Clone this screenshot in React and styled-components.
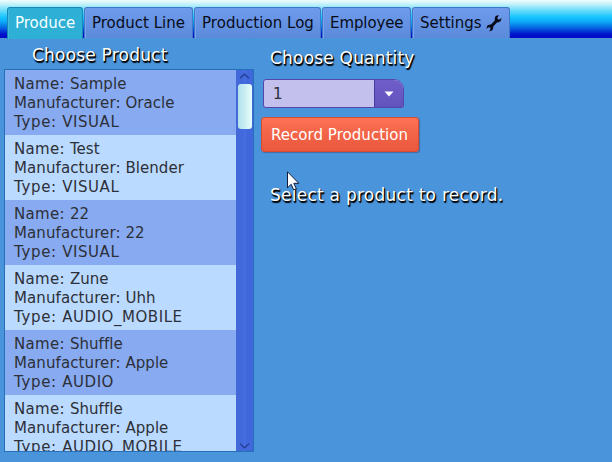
import React from "react";
import styled, { createGlobalStyle } from "styled-components";

const GlobalStyle = createGlobalStyle`
  * { box-sizing: border-box; }
  html, body { margin: 0; overflow: hidden; }
  body { font-family: Verdana, "DejaVu Sans", sans-serif; font-size: 15px; color: #2d3038; }
`;

const Window = styled.main`
  width: 612px;
  height: 462px;
  display: flex;
  flex-direction: column;
  background: #4a94dc;
  overflow: hidden;
`;

const TabBar = styled.nav`
  height: 38px;
  flex: none;
  display: flex;
  align-items: flex-end;
  gap: 1px;
  padding-left: 7px;
  background: linear-gradient(#effcfd 0, #c5f3fa 4px, #62dafa 11px, #16c5ff 17px, #0da6f7 22px, #0563e0 28px, #0014ce 34px, #0008c4 38px);
`;

const Tab = styled.button`
  width: ${(p) => p.$width}px;
  height: ${(p) => (p.$active ? 32 : 31)}px;
  margin: 0 0 ${(p) => (p.$active ? -1 : 0)}px;
  padding: 0 0 ${(p) => (p.$active ? 1 : 0)}px 7px;
  display: flex;
  align-items: center;
  gap: 4px;
  flex: none;
  border: 1px solid ${(p) => (p.$active ? "#1689b8" : "#4078c8")};
  border-bottom: 0;
  border-radius: 3px 3px 0 0;
  background: ${(p) => (p.$active ? "#2eafd5" : "linear-gradient(#709bed, #5b8ada)")};
  box-shadow: inset 1px 0 ${(p) => (p.$active ? "#42bbdd" : "#7aa1ed")};
  color: ${(p) => (p.$active ? "#f5ffff" : "#080c18")};
  font: inherit;
  letter-spacing: ${(p) => p.$spacing || 0}px;
  white-space: nowrap;
`;

const Content = styled.div`
  flex: 1;
  min-height: 0;
  display: flex;
`;

const ProductColumn = styled.section`
  width: 254px;
  padding: 6px 0 0 4px;
`;

const Label = styled.h2`
  margin: 0;
  height: 25px;
  line-height: 22px;
  padding-left: ${(p) => p.$indent || 0}px;
  color: #fff;
  font-size: 17px;
  font-weight: 400;
  letter-spacing: ${(p) => p.$spacing}px;
  text-shadow: 1px 1px 1px #000, 1px 2px 1px #000;
  white-space: nowrap;
`;

const ListBox = styled.div`
  width: 250px;
  height: 383px;
  display: flex;
  border: 1px solid #266fb9;
  overflow: hidden;
`;

const Rows = styled.div`
  width: 231px;
  overflow: hidden;
`;

const Row = styled.div`
  height: 65px;
  padding: 5px 0 3px 9px;
  line-height: 19px;
  white-space: nowrap;
  background: ${(p) => (p.$dark ? "#87aaf0" : "#badaff")};
`;

const Field = styled.span`
  letter-spacing: ${(p) => p.$spacing}px;
`;

const ScrollBar = styled.div`
  width: 17px;
  display: flex;
  flex-direction: column;
  align-items: center;
  justify-content: space-between;
  padding: 3px 0 2px;
  background: linear-gradient(90deg, #4469d8, #4169dd 45%, #4870e2 50%, #4067dc 60%);
`;

const Thumb = styled.div`
  width: 14px;
  height: 45px;
  margin: 5px 0 auto;
  border-radius: 3px;
  background: linear-gradient(90deg, #b3e1ec, #c9eef3 50%, #eafffd);
`;

const ControlColumn = styled.section`
  padding: 9px 0 0 7px;
`;

const Combo = styled.div`
  width: 141px;
  height: 29px;
  margin: 7px 0 9px 2px;
  display: flex;
  border: 1px solid #5546ae;
  border-radius: 3px 10px 2px 3px;
  overflow: hidden;
  background: #c3c0ed;
`;

const ComboValue = styled.span`
  flex: 1;
  padding-left: 9px;
  line-height: 28px;
`;

const ComboArrow = styled.span`
  width: 29px;
  display: flex;
  align-items: center;
  justify-content: center;
  border-left: 1px solid #493b9d;
  background: linear-gradient(#705fcb, #6252bb);
`;

const RecordButton = styled.button`
  display: block;
  width: 158px;
  height: 35px;
  padding: 0 0 0 9px;
  border: 1px solid #d74a33;
  border-radius: 3px;
  background: linear-gradient(#ff7255, #f36549 45%, #ea573d);
  box-shadow: 1px 1px 1px #456ca2;
  color: #fff;
  font: inherit;
  letter-spacing: 0.04px;
  text-align: left;
  white-space: nowrap;
`;

const Status = styled.div`
  position: relative;
  margin-top: 32px;
`;

const Pointer = styled.svg`
  position: absolute;
  left: 26px;
  top: -13px;
`;

const tabs = [
  { name: "Produce", width: 76, active: true },
  { name: "Product Line", width: 109 },
  { name: "Production Log", width: 127, spacing: 0.04 },
  { name: "Employee", width: 89, spacing: -0.1 },
  { name: "Settings", width: 98, wrench: true },
];

const products = [
  ["Sample", "Oracle", "VISUAL"],
  ["Test", "Blender", "VISUAL"],
  ["22", "22", "VISUAL"],
  ["Zune", "Uhh", "AUDIO_MOBILE"],
  ["Shuffle", "Apple", "AUDIO"],
  ["Shuffle", "Apple", "AUDIO_MOBILE"],
];

const Wrench = () => (
  <svg width="16" height="18" viewBox="0 0 16 18">
    <path d="M5 12.8 11 6.2" stroke="#080c18" strokeWidth="3" />
    <path
      d="M12.8 1 9.6 2 8.6 5 9.4 7.8 12 8.4 14.6 7.2 15.6 4 12.9 5.7 11.3 4.2ZM3.3 17.4 6.4 16.2 7.3 13.6 6.6 11.1 4.1 10.4 1.4 11.5.3 14.7 3.1 13 4.7 14.5Z"
      fill="#080c18"
    />
  </svg>
);

const Chevron = ({ down }) => (
  <svg width="11" height="6" viewBox="0 0 11 6" fill="none" stroke="#253f94" strokeWidth="1.3">
    <path d={down ? "M1 .8 5.5 4.8 10 .8" : "M1 5.2 5.5 1.2 10 5.2"} />
  </svg>
);

export default function App() {
  return (
    <Window>
      <GlobalStyle />
      <TabBar>
        {tabs.map((t) => (
          <Tab key={t.name} $width={t.width} $active={t.active} $spacing={t.spacing}>
            {t.name}
            {t.wrench && <Wrench />}
          </Tab>
        ))}
      </TabBar>
      <Content>
        <ProductColumn>
          <Label $indent={28} $spacing={0.2}>Choose Product</Label>
          <ListBox>
            <Rows>
              {products.map(([name, maker, type], i) => (
                <Row key={i} $dark={i % 2 === 0}>
                  <div><Field $spacing={0.3}>Name: </Field><Field $spacing={0.05}>{name}</Field></div>
                  <div><Field $spacing={0.1}>Manufacturer: </Field><Field $spacing={0.05}>{maker}</Field></div>
                  <div><Field $spacing={0.65}>Type: </Field><Field $spacing={0.55}>{type}</Field></div>
                </Row>
              ))}
            </Rows>
            <ScrollBar>
              <Chevron />
              <Thumb />
              <Chevron down />
            </ScrollBar>
          </ListBox>
        </ProductColumn>
        <ControlColumn>
          <Label $indent={9} $spacing={0.2}>Choose Quantity</Label>
          <Combo>
            <ComboValue>1</ComboValue>
            <ComboArrow>
              <svg width="10" height="6" viewBox="0 0 10 6"><path d="M.5.5h9L5 5.5z" fill="#fff" /></svg>
            </ComboArrow>
          </Combo>
          <RecordButton>Record Production</RecordButton>
          <Status>
            <Label $indent={9} $spacing={0.25}>Select a product to record.</Label>
            <Pointer width="13" height="20" viewBox="0 0 13 20">
              <path d="M.5.8v16l3.7-3.5 2.5 5.6 2.6-1.2-2.5-5.4h5z" fill="#fff" stroke="#111c3c" />
            </Pointer>
          </Status>
        </ControlColumn>
      </Content>
    </Window>
  );
}
